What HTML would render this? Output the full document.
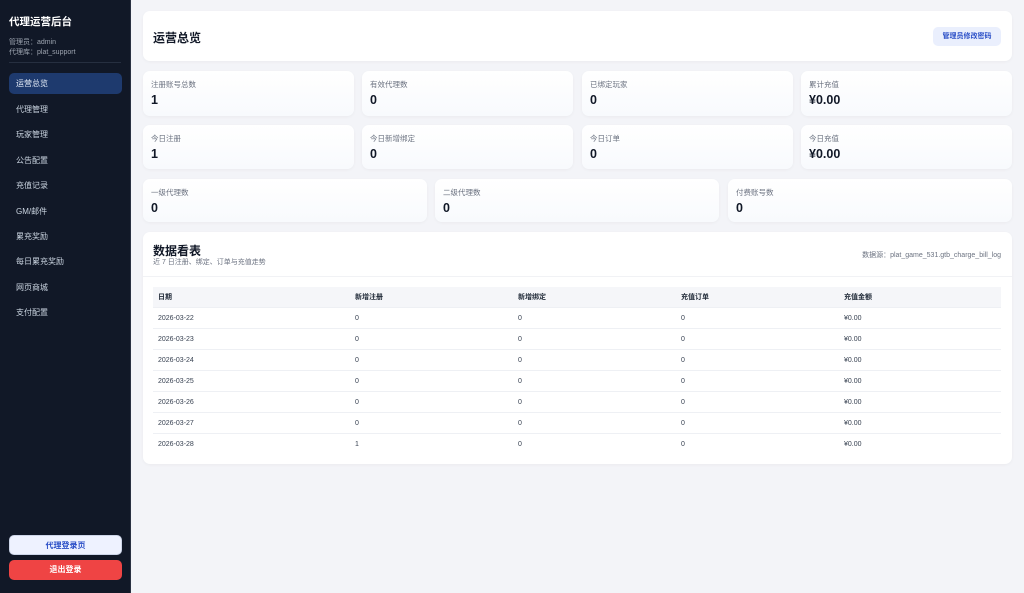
<!DOCTYPE html><html><head><meta charset="utf-8"><style>
*{margin:0;padding:0;box-sizing:border-box}
body{width:1024px;height:593px;overflow:hidden;background:#f3f4f8;font-family:"Liberation Sans","Noto Sans CJK SC",sans-serif;position:relative}
.sb{position:absolute;left:0;top:0;width:131px;height:593px;background:#111827;border-right:1px solid #2a3142}
.sb h1{position:absolute;left:9px;top:14px;font-size:10.5px;color:#fff;font-weight:bold}
.meta{position:absolute;left:9px;top:38px;font-size:7px;color:#9ca3af;line-height:9.5px}
.hr{position:absolute;left:9px;right:9px;top:62px;border-top:1px solid #262f40}
.nav{position:absolute;left:9px;width:113px;height:21px;font-size:8px;color:#cbd5e1;line-height:21px;padding-left:7px;border-radius:5px}
.nav.a{background:#1e3a6e;color:#e5edf9}
.btn{position:absolute;left:9px;width:113px;height:20px;border-radius:5px;font-size:8px;font-weight:bold;text-align:center;line-height:20px}
.card{position:absolute;background:#fff;border-radius:7px;box-shadow:0 1px 3px rgba(0,0,0,.04)}
.st .l{position:absolute;left:8px;top:8px;font-size:7.5px;color:#6b7280}
.st .v{position:absolute;left:8px;top:22px;font-size:12.5px;font-weight:bold;color:#111827}
.st{background:linear-gradient(180deg,#fff,#f8fafd)}
table{position:absolute;left:153px;top:287px;width:848px;border-collapse:collapse;font-size:7px;color:#374151}
td,th{text-align:left;padding-left:5px;height:21px;border-bottom:1px solid #eef0f4;padding-top:1px}
th{background:#f5f6f9;font-weight:bold;color:#1f2937;height:20px}
</style></head><body>
<div class="sb">
<h1>代理运营后台</h1>
<div class="meta">管理员：admin<br>代理库：plat_support</div>
<div class="hr"></div>
<div class="nav a" style="top:73px">运营总览</div>
<div class="nav" style="top:99px">代理管理</div>
<div class="nav" style="top:124px">玩家管理</div>
<div class="nav" style="top:150px">公告配置</div>
<div class="nav" style="top:175px">充值记录</div>
<div class="nav" style="top:201px">GM/邮件</div>
<div class="nav" style="top:226px">累充奖励</div>
<div class="nav" style="top:251px">每日累充奖励</div>
<div class="nav" style="top:277px">网页商城</div>
<div class="nav" style="top:302px">支付配置</div>
<div class="btn" style="top:535px;background:#eef2ff;color:#2b4fc7;border:1px solid #cdd5e8">代理登录页</div>
<div class="btn" style="top:560px;background:#ef4444;color:#fff">退出登录</div>
</div>
<div class="card" style="left:143px;top:11px;width:869px;height:50px">
<div style="position:absolute;left:10px;top:18px;font-size:12px;font-weight:bold;color:#111827">运营总览</div>
<div style="position:absolute;right:11px;top:16px;width:68px;height:19px;background:#eaeffd;border-radius:5px;font-size:7px;font-weight:bold;color:#2b4fc7;text-align:center;line-height:19px">管理员修改密码</div>
</div>
<div class="card st" style="left:143px;top:71px;width:211px;height:45px"><div class="l">注册账号总数</div><div class="v">1</div></div>
<div class="card st" style="left:362px;top:71px;width:211px;height:45px"><div class="l">有效代理数</div><div class="v">0</div></div>
<div class="card st" style="left:582px;top:71px;width:211px;height:45px"><div class="l">已绑定玩家</div><div class="v">0</div></div>
<div class="card st" style="left:801px;top:71px;width:211px;height:45px"><div class="l">累计充值</div><div class="v">¥0.00</div></div>
<div class="card st" style="left:143px;top:125px;width:211px;height:44px"><div class="l">今日注册</div><div class="v">1</div></div>
<div class="card st" style="left:362px;top:125px;width:211px;height:44px"><div class="l">今日新增绑定</div><div class="v">0</div></div>
<div class="card st" style="left:582px;top:125px;width:211px;height:44px"><div class="l">今日订单</div><div class="v">0</div></div>
<div class="card st" style="left:801px;top:125px;width:211px;height:44px"><div class="l">今日充值</div><div class="v">¥0.00</div></div>
<div class="card st" style="left:143px;top:179px;width:284px;height:43px"><div class="l">一级代理数</div><div class="v">0</div></div>
<div class="card st" style="left:435px;top:179px;width:284px;height:43px"><div class="l">二级代理数</div><div class="v">0</div></div>
<div class="card st" style="left:728px;top:179px;width:284px;height:43px"><div class="l">付费账号数</div><div class="v">0</div></div>
<div class="card" style="left:143px;top:232px;width:869px;height:232px">
<div style="position:absolute;left:10px;top:10px;font-size:12px;font-weight:bold;color:#111827">数据看表</div>
<div style="position:absolute;left:10px;top:25px;font-size:7px;color:#6b7280">近 7 日注册、绑定、订单与充值走势</div>
<div style="position:absolute;right:11px;top:18px;font-size:7px;color:#6b7280">数据源：plat_game_531.gtb_charge_bill_log</div>
<div style="position:absolute;left:0;right:0;top:44px;border-top:1px solid #f1f2f5"></div>
</div>
<table>
<tr><th style="width:197px">日期</th><th style="width:163px">新增注册</th><th style="width:163px">新增绑定</th><th style="width:163px">充值订单</th><th>充值金额</th></tr>
<tr><td>2026-03-22</td><td>0</td><td>0</td><td>0</td><td>¥0.00</td></tr>
<tr><td>2026-03-23</td><td>0</td><td>0</td><td>0</td><td>¥0.00</td></tr>
<tr><td>2026-03-24</td><td>0</td><td>0</td><td>0</td><td>¥0.00</td></tr>
<tr><td>2026-03-25</td><td>0</td><td>0</td><td>0</td><td>¥0.00</td></tr>
<tr><td>2026-03-26</td><td>0</td><td>0</td><td>0</td><td>¥0.00</td></tr>
<tr><td>2026-03-27</td><td>0</td><td>0</td><td>0</td><td>¥0.00</td></tr>
<tr><td style="border:0">2026-03-28</td><td style="border:0">1</td><td style="border:0">0</td><td style="border:0">0</td><td style="border:0">¥0.00</td></tr>
</table>
</body></html>
